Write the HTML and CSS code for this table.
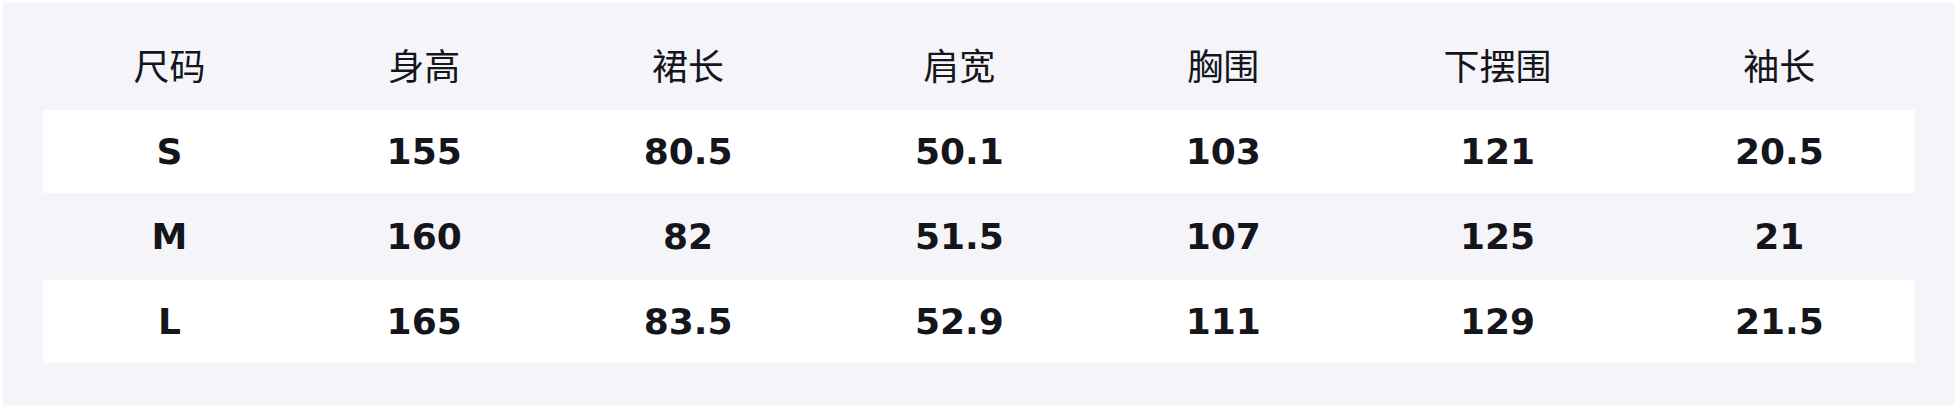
FILE: index.html
```html
<!DOCTYPE html>
<html lang="zh-CN">
<head>
<meta charset="utf-8">
<title>尺码表</title>
<link rel="stylesheet" href="styles.css">
</head>
<body>
<div class="sheet">
  <table class="size-table">
    <thead>
      <tr class="head-row"><th>尺码</th><th>身高</th><th>裙长</th><th>肩宽</th><th>胸围</th><th>下摆围</th><th>袖长</th></tr>
    </thead>
    <tbody>
      <tr class="light short"><td>S</td><td>155</td><td>80.5</td><td>50.1</td><td>103</td><td>121</td><td>20.5</td></tr>
      <tr class="tall"><td>M</td><td>160</td><td>82</td><td>51.5</td><td>107</td><td>125</td><td>21</td></tr>
      <tr class="light short"><td>L</td><td>165</td><td>83.5</td><td>52.9</td><td>111</td><td>129</td><td>21.5</td></tr>
    </tbody>
  </table>
</div>
</body>
</html>
```
FILE: styles.css
```css
html, body {
  margin: 0;
  padding: 0;
  background: #ffffff;
}
body {
  padding: 3px;
}
.sheet {
  background: #f4f4f9;
  height: 402px;
  box-sizing: border-box;
  padding: 23px 40px 0 40px;
}
.size-table {
  width: 100%;
  border-collapse: collapse;
  border-spacing: 0;
  color: #15151c;
}
.size-table th,
.size-table td {
  padding: 0 80px;
  text-align: center;
  vertical-align: middle;
  font-size: 36px;
  line-height: 40px;
  white-space: nowrap;
}
.head-row {
  height: 84px;
}
.short {
  height: 83px;
}
.tall {
  height: 87px;
}
.size-table th {
  font-family: "Noto Sans CJK SC", "Noto Sans", sans-serif;
  font-weight: 400;
  padding-bottom: 9px;
}
.size-table td {
  font-family: "DejaVu Sans", sans-serif;
  font-weight: 700;
}
.size-table tr.light td {
  background: #ffffff;
}
```
